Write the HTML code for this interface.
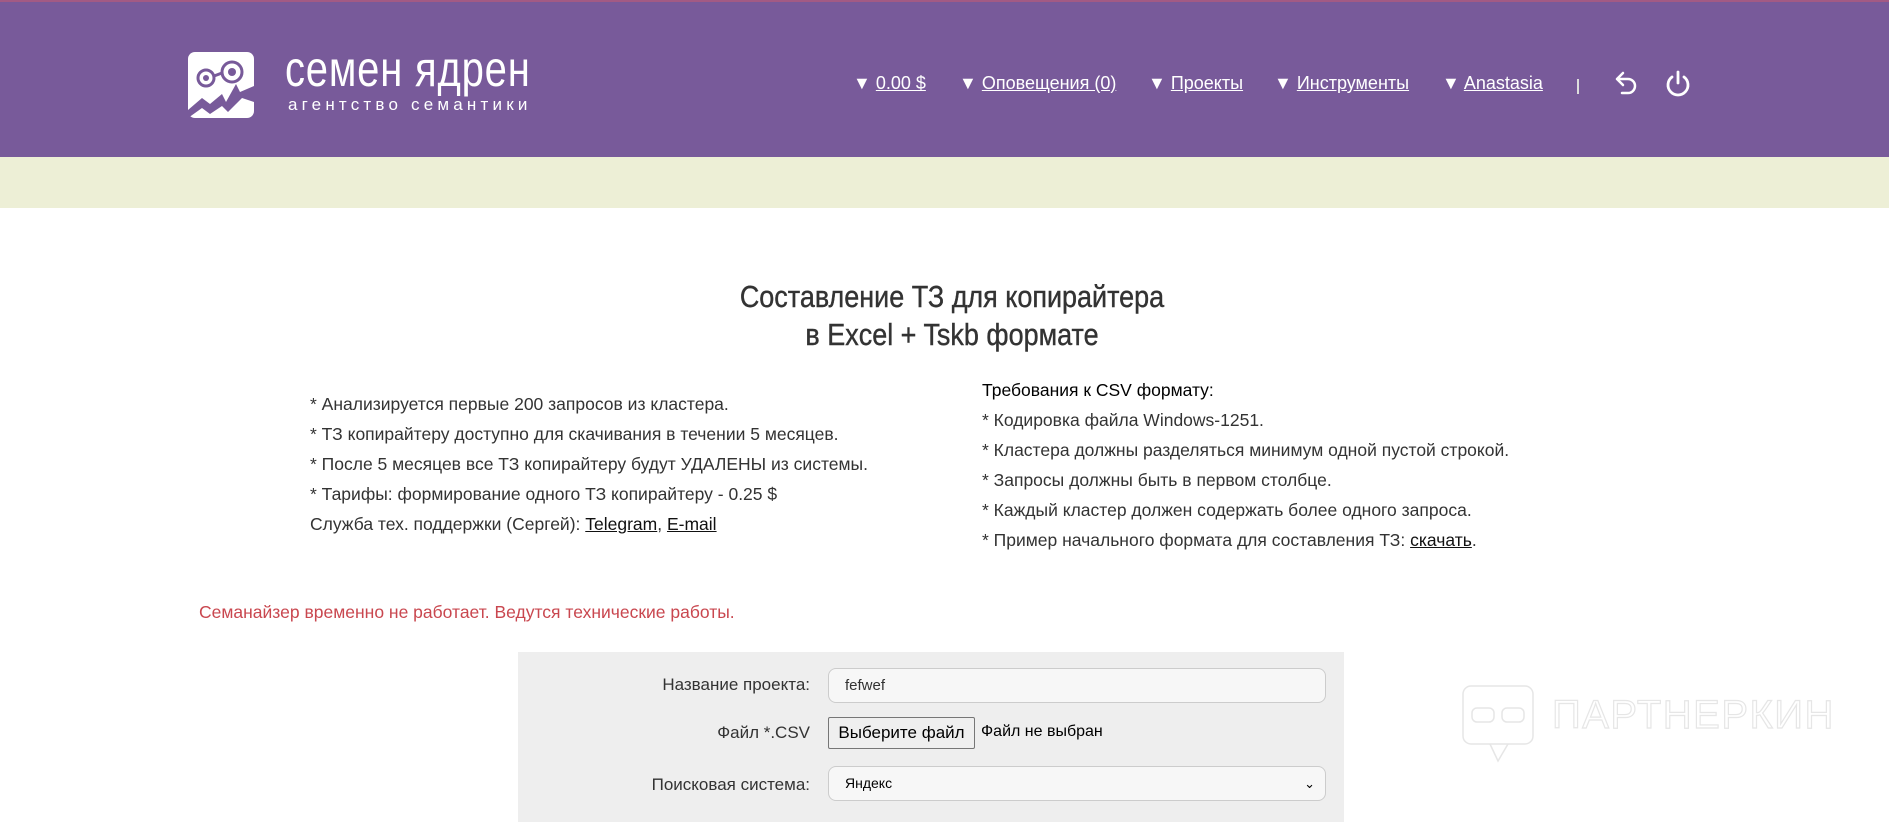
<!DOCTYPE html>
<html><head><meta charset="utf-8">
<style>
*{margin:0;padding:0;box-sizing:border-box}
body{width:1889px;height:818px;overflow:hidden;background:#fff;font-family:"Liberation Sans","DejaVu Sans",sans-serif;color:#333;position:relative}
.hdr{position:absolute;left:0;top:0;width:1889px;height:157px;background:#785a9a;border-top:2px solid #a35a84}
.band{position:absolute;left:0;top:157px;width:1889px;height:51px;background:#edefd6}
.abs{position:absolute;white-space:nowrap}
.nav{color:#fff;font-size:18px;top:73px}
.nav u{text-decoration:underline}
.t{font-size:17.5px;color:#333;line-height:30px}
.t u{color:#111}
.lbl{font-size:17px;color:#333;text-align:right;width:300px;left:510px}
.inp{position:absolute;background:#f7f7f7;border:1px solid #ccc;border-radius:8px;font-size:15px;color:#333;padding-left:16px}
</style></head><body>
<div class="hdr"></div>
<div class="band"></div>
<svg class="abs" style="left:188px;top:52px" width="66" height="66" viewBox="0 0 66 66">
<rect x="0" y="0" width="66" height="66" rx="7" fill="#fff"/>
<circle cx="18" cy="26" r="8" fill="none" stroke="#785a9a" stroke-width="3"/><circle cx="18" cy="26" r="3" fill="#785a9a"/>
<circle cx="44" cy="20" r="10" fill="none" stroke="#785a9a" stroke-width="3"/><circle cx="44" cy="20" r="4" fill="#785a9a"/>
<path d="M26 24 L34 21" stroke="#785a9a" stroke-width="3"/>
<path d="M0 58 L14 46 L22 52 L34 42 L38 50 L48 32 L52 40 L66 34 L66 50 L54 46 L48 52 L40 60 L34 54 L22 62 L14 56 L0 66Z" fill="#785a9a"/>
</svg>
<div class="abs" style="left:285px;top:40px;font-size:50px;color:#fff;font-family:'Liberation Sans Narrow','Liberation Sans',sans-serif;font-weight:300;letter-spacing:1px;transform:scaleX(0.8);transform-origin:left">семен ядрен</div>
<div class="abs" style="left:288px;top:95px;font-size:17px;color:#fff;letter-spacing:4.2px">агентство семантики</div>
<div class="abs nav" style="left:853px">▼ <u>0.00 $</u></div>
<div class="abs nav" style="left:959px">▼ <u>Оповещения (0)</u></div>
<div class="abs nav" style="left:1148px">▼ <u>Проекты</u></div>
<div class="abs nav" style="left:1274px">▼ <u>Инструменты</u></div>
<div class="abs nav" style="left:1442px">▼ <u>Anastasia</u></div>
<div class="abs" style="left:1577px;top:79px;width:2px;height:15px;background:#ddd"></div>
<svg class="abs" style="left:1614px;top:70px" width="26" height="28" viewBox="0 0 26 28"><path d="M9 3 L3 9 L9 15 M3 9 H14 A7 7 0 0 1 14 23 H8" fill="none" stroke="#fff" stroke-width="2.5" stroke-linecap="round" stroke-linejoin="round"/></svg>
<svg class="abs" style="left:1664px;top:70px" width="28" height="28" viewBox="0 0 28 28"><path d="M8 7 A10 10 0 1 0 20 7" fill="none" stroke="#fff" stroke-width="2.8" stroke-linecap="round"/><path d="M14 2 V13" stroke="#fff" stroke-width="2.8" stroke-linecap="round"/></svg>
<div class="abs" style="left:0;width:1904px;text-align:center;top:278px;font-size:31px;line-height:38px;color:#333;transform:scaleX(0.87);transform-origin:952px 0;-webkit-text-stroke:0.4px #333">Составление ТЗ для копирайтера<br>в Excel + Tskb формате</div>
<div class="abs t" style="left:310px;top:389px">* Анализируется первые 200 запросов из кластера.<br>* ТЗ копирайтеру доступно для скачивания в течении 5 месяцев.<br>* После 5 месяцев все ТЗ копирайтеру будут УДАЛЕНЫ из системы.<br>* Тарифы: формирование одного ТЗ копирайтеру - 0.25 $<br>Служба тех. поддержки (Сергей): <u>Telegram</u>, <u>E-mail</u></div>
<div class="abs t" style="left:982px;top:375px"><span style="color:#000">Требования к CSV формату:</span><br>* Кодировка файла Windows-1251.<br>* Кластера должны разделяться минимум одной пустой строкой.<br>* Запросы должны быть в первом столбце.<br>* Каждый кластер должен содержать более одного запроса.<br>* Пример начального формата для составления ТЗ: <u>скачать</u>.</div>
<div class="abs" style="left:199px;top:602px;font-size:17.5px;color:#c9474f">Семанайзер временно не работает. Ведутся технические работы.</div>
<div class="abs" style="left:518px;top:652px;width:826px;height:170px;background:#eeeeee"></div>
<div class="abs lbl" style="top:675px">Название проекта:</div>
<div class="inp" style="left:828px;top:668px;width:498px;height:35px;line-height:33px">fefwef</div>
<div class="abs lbl" style="top:723px">Файл *.CSV</div>
<div class="abs" style="left:828px;top:717px;width:147px;height:32px;border:1px solid #767676;background:#efefef;font-size:17px;line-height:30px;text-align:center;color:#000;border-radius:2px">Выберите файл</div>
<div class="abs" style="left:981px;top:723px;font-size:16px;color:#000">Файл не выбран</div>
<div class="abs lbl" style="top:775px">Поисковая система:</div>
<div class="inp" style="left:828px;top:766px;width:498px;height:35px;line-height:33px;font-size:14px;color:#000">Яндекс<span style="position:absolute;right:10px;top:0;font-size:13px">&#8964;</span></div>
<svg class="abs" style="left:1460px;top:683px" width="380" height="80" viewBox="0 0 380 80"><g fill="none" stroke="#e6e6e6" stroke-width="1.5"><rect x="3" y="3" width="70" height="58" rx="8"/><path d="M30 61 L38 78 L48 61"/><rect x="12" y="25" width="22" height="14" rx="5"/><rect x="42" y="25" width="22" height="14" rx="5"/></g><text x="92" y="45" font-family="Liberation Sans,sans-serif" font-size="40" fill="none" stroke="#e6e6e6" stroke-width="1.2" letter-spacing="1.5">ПАРТНЕРКИН</text></svg>
</body></html>
